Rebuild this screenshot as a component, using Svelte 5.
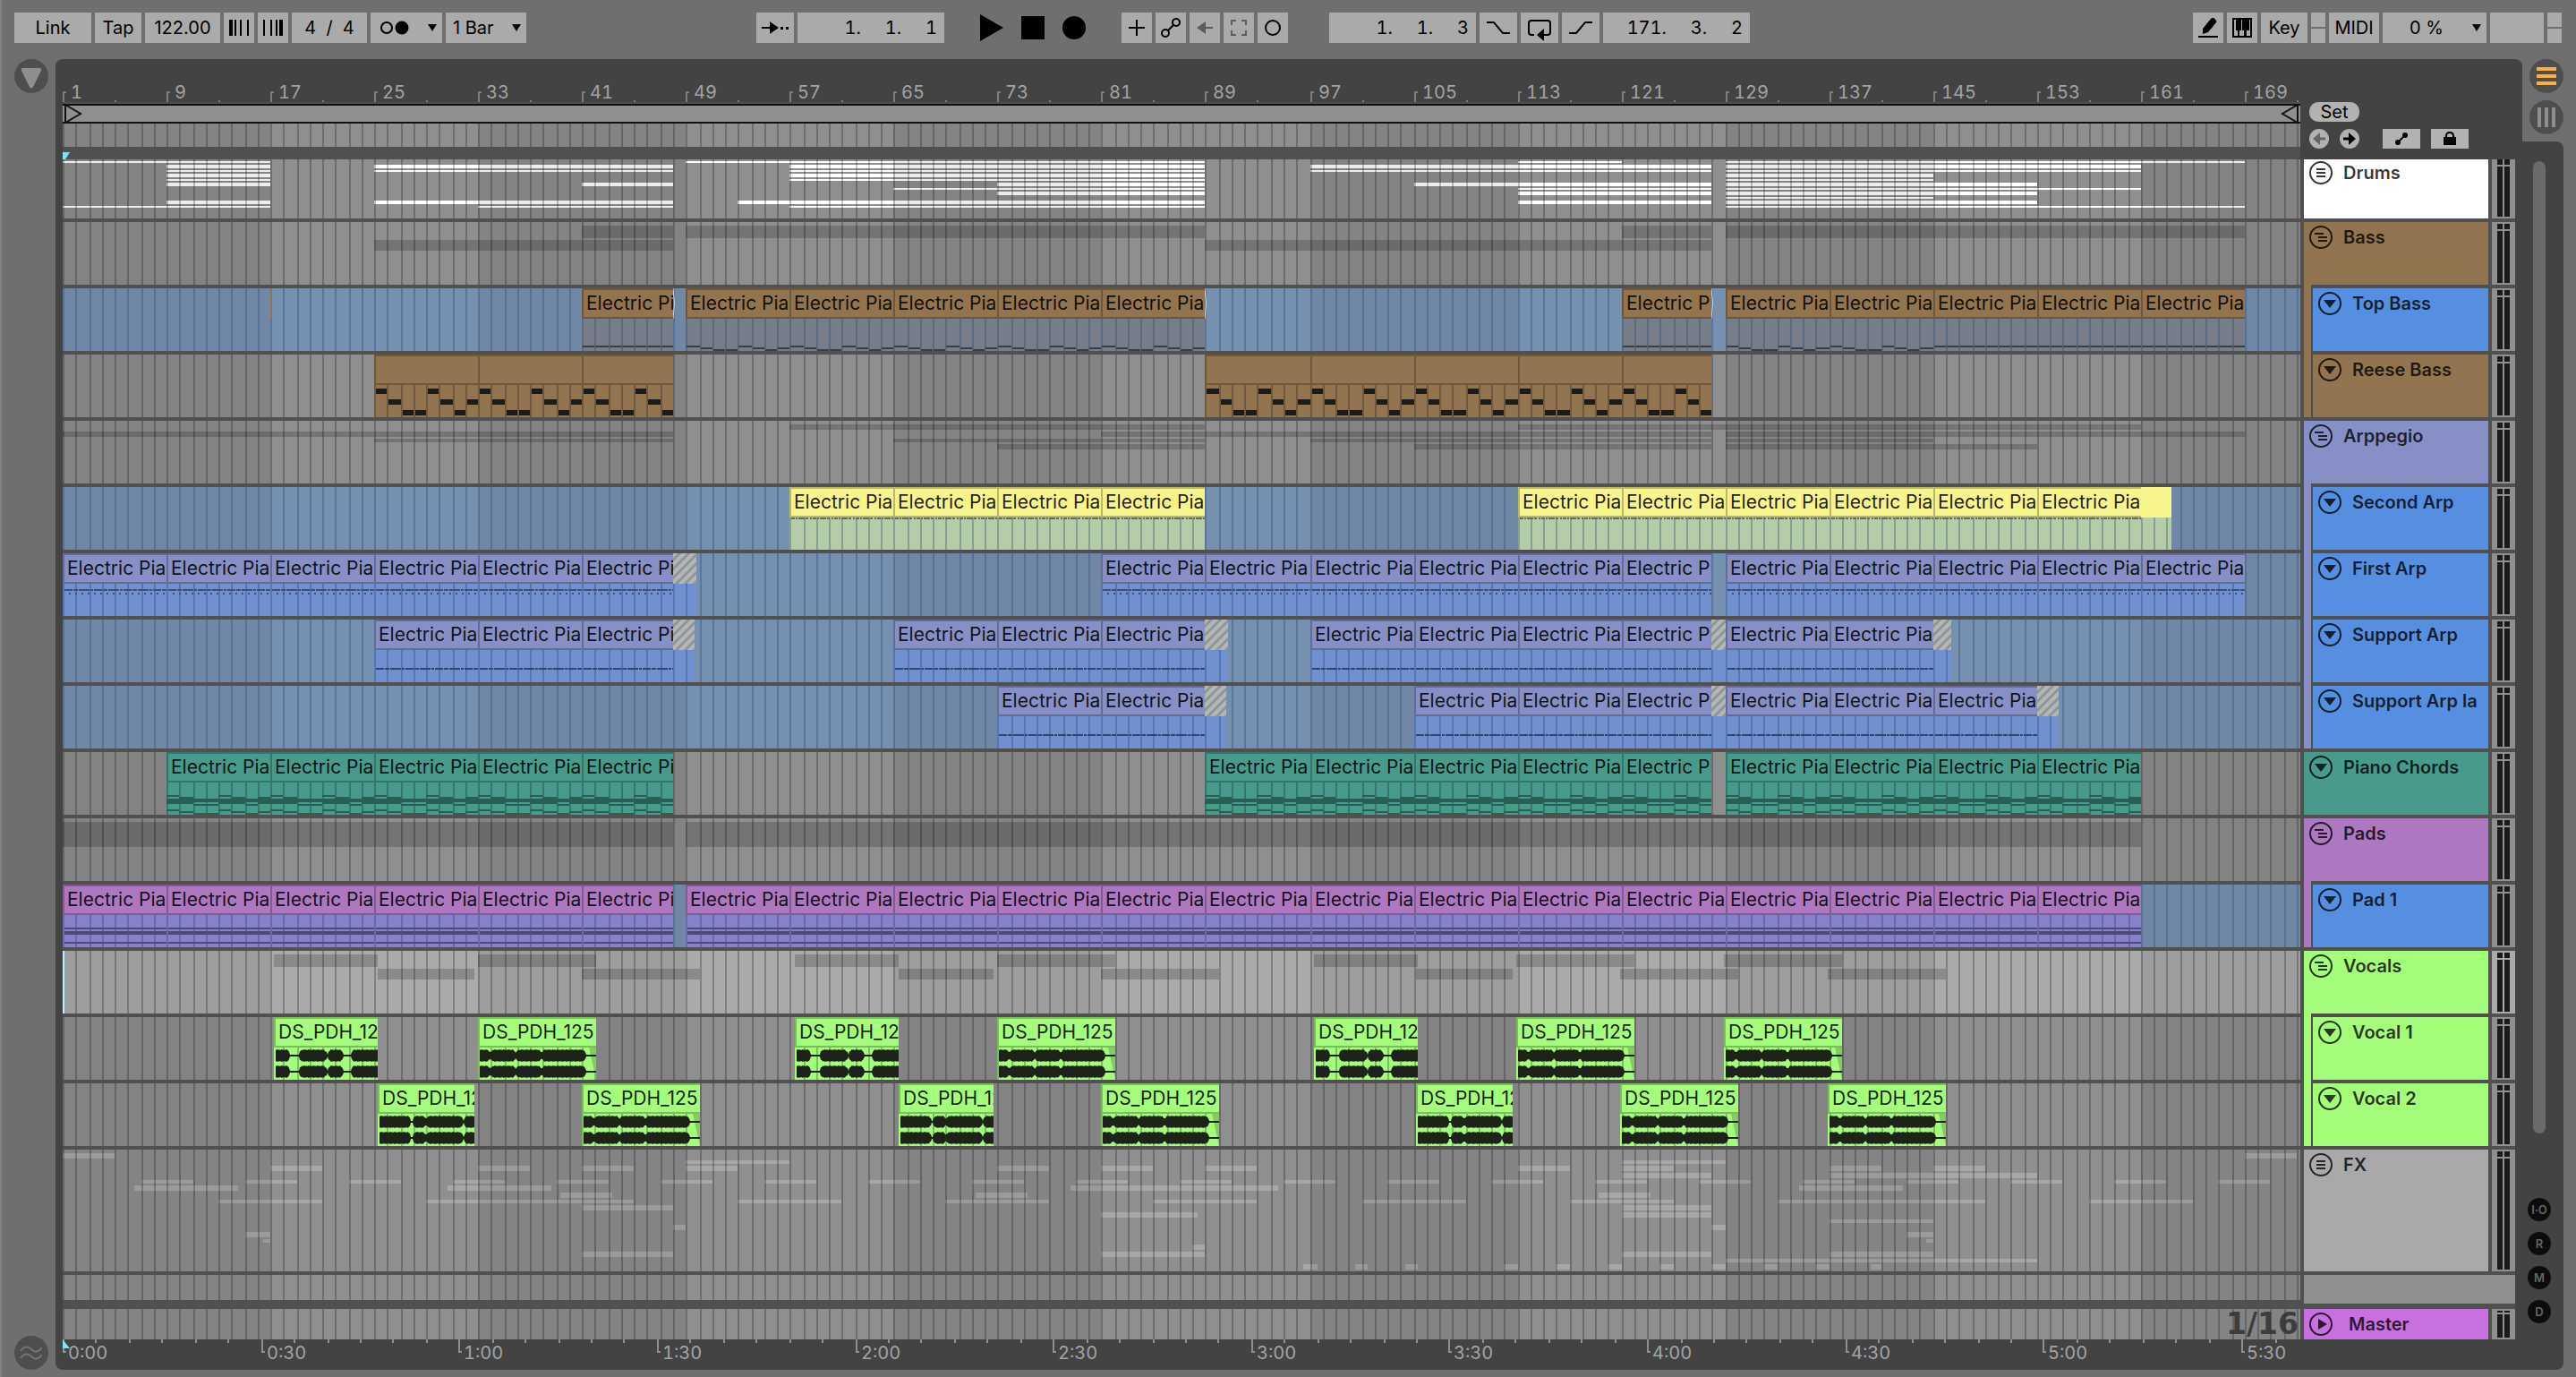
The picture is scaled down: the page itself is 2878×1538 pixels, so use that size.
<script>
  const TOTAL_BARS = 172.29;
  const BEATS_PER_SECOND = 122 / 60;

  let width = $state(2500);
  let ppb = $derived(width / TOTAL_BARS);

  // snap to even pixels so grid lines and clip edges stay crisp
  function x(bar) {
    return 2 * Math.round((bar * ppb) / 2);
  }

  const range = (from, to, step = 8) => {
    const out = [];
    for (let b = from; b < to; b += step) out.push([b, Math.min(b + step, to)]);
    return out;
  };

  const BLUE_LANE = '#7690af';
  const BLUE_BODY = '#7090d0';
  const BLUE = '#578fe0';
  const BROWN = '#937450';
  const LILAC = '#8690c6';
  const TEAL = '#489a8d';
  const PURPLE = '#ad78c0';
  const GREEN = '#a5fc7a';

  // stripes: [top, height, [from, to], ...]
  const drumStripes = [
    [2, 2, [0, 16], [48, 88], [112, 120], [128, 168]],
    [6, 4, [8, 16], [24, 47], [56, 88], [96, 127], [128, 160]],
    [12, 2, [8, 16], [24, 47], [56, 88], [96, 127], [128, 160]],
    [16, 4, [8, 16], [56, 88], [128, 144]],
    [22, 2, [8, 16], [56, 88], [128, 144]],
    [26, 4, [8, 16], [40, 47], [72, 88], [104, 127], [128, 152]],
    [32, 2, [64, 88], [112, 127], [128, 160]],
    [36, 4, [72, 88], [112, 127], [128, 152]],
    [42, 2, [128, 144]],
    [46, 4, [8, 16], [24, 47], [52, 88], [112, 127], [128, 152]],
    [52, 2, [0, 16], [32, 47], [56, 88], [128, 168]],
  ];

  const bassStripes = [
    [4, 14, [40, 47], [48, 88], [120, 127], [128, 168]],
    [20, 12, [24, 47], [88, 127]],
  ];

  const arpStripes = [
    [4, 6, [56, 88], [112, 160]],
    [12, 6, [0, 47], [80, 127], [128, 168]],
    [20, 4, [24, 47], [64, 88], [96, 127], [128, 144]],
    [26, 6, [72, 88], [104, 127], [128, 152]],
  ];

  const fxStripes = [
    [4, 6, [0, 4], [168, 172]],
    [12, 4, [48, 56], [120, 128]],
    [18, 6, [16, 20], [32, 36], [40, 44], [48, 52], [72, 76], [80, 84], [88, 92], [112, 116], [120, 124], [136, 140], [144, 148]],
    [26, 6, [120, 127], [136, 152]],
    [34, 4, ...Array.from({ length: 21 }, (_, i) => [6 + i * 8, 10 + i * 8])],
    [40, 6, [5.5, 13.5], [29.6, 37.6], [77.6, 93.6], [133.7, 141.7]],
    [48, 6, [38.3, 42.3], [70.3, 74.3], [118.3, 122.3]],
    [56, 4, [12, 20], [28, 44], [52, 60], [68, 76], [84, 92], [100, 108], [116, 124], [132, 148], [156, 164]],
    [62, 6, [40, 47], [120, 127]],
    [70, 6, [80, 87.4], [120, 127]],
    [78, 4, [136, 144]],
    [84, 6, [47, 48], [127, 128]],
    [92, 6, [14.1, 16], [142, 144]],
    [100, 4, [15.4, 16], [143.5, 144]],
    [106, 6, [87, 88]],
    [114, 6, [40, 47], [80, 88], [120, 127], [136, 144]],
    [122, 4, [128, 152]],
    [128, 6, [95.5, 96.6], [99.5, 100.5], [103.4, 104.4], [111, 112], [115, 116], [119, 120], [123, 124], [127, 128], [131, 132], [135, 136], [139.2, 140]],
  ];

  const vocal1 = [[16.3, 24.3], [32, 41.05], [56.4, 64.4], [72, 81.05], [96.3, 104.3], [111.9, 120.95], [127.9, 136.95]];
  const vocal2 = [[24.3, 31.65], [40, 49.05], [64.3, 71.65], [80, 89.05], [104.2, 111.6], [119.9, 128.95], [135.9, 144.95]];
  const vocalStripes = [[4, 14, ...vocal1], [20, 12, ...vocal2]];

  const reeseClips = [...range(24, 47), ...range(88, 127)];
  const secondClips = [...range(56, 88), ...range(112, 160)];
  const firstClips = [...range(0, 47), ...range(80, 127), ...range(128, 168)];
  const supportClips = [...range(24, 47), ...range(64, 88), ...range(96, 127), ...range(128, 144)];
  const layerClips = [...range(72, 88), ...range(104, 127), ...range(128, 152)];
  const pianoClips = [...range(8, 47), ...range(88, 127), ...range(128, 160)];
  const padClips = [...range(0, 47), ...range(48, 160)];
  const topClips = [...range(40, 47), ...range(48, 88), ...range(120, 127), ...range(128, 168)];

  const EP = 'Electric Pia';

  const tracks = [
    { name: 'Drums', icon: 'list', color: '#ffffff', height: 66, cut: true, stripes: drumStripes, stripeColor: '#ffffff' },
    { name: 'Bass', icon: 'group', color: BROWN, stripes: bassStripes },
    { name: 'Top Bass', parent: BROWN, color: BLUE, lane: BLUE_LANE, clips: topClips, label: EP, clip: BROWN, body: '#777e89', notes: 'top', fades: [47, 88, 127], sliver: 16 },
    { name: 'Reese Bass', parent: BROWN, color: BROWN, clips: reeseClips, label: '', clip: BROWN, body: BROWN, notes: 'reese' },
    { name: 'Arppegio', icon: 'group', color: LILAC, stripes: arpStripes },
    { name: 'Second Arp', parent: LILAC, color: BLUE, lane: BLUE_LANE, clips: secondClips, label: EP, clip: '#f8f48c', body: '#b4cca8', notes: 'second', tails: [[160, 162.35]], plainTail: true },
    { name: 'First Arp', parent: LILAC, color: BLUE, lane: BLUE_LANE, clips: firstClips, label: EP, clip: LILAC, body: BLUE_BODY, notes: 'first', tails: [[47, 48.8]] },
    { name: 'Support Arp', parent: LILAC, color: BLUE, lane: BLUE_LANE, clips: supportClips, label: EP, clip: LILAC, body: BLUE_BODY, notes: 'support', tails: [[47, 48.65], [88, 89.7], [127, 128], [144, 145.4]] },
    { name: 'Support Arp la', parent: LILAC, color: BLUE, lane: BLUE_LANE, clips: layerClips, label: EP, clip: LILAC, body: BLUE_BODY, notes: 'support', tails: [[88, 89.6], [127, 128], [152, 153.7]] },
    { name: 'Piano Chords', color: TEAL, clips: pianoClips, label: EP, clip: TEAL, body: TEAL, notes: 'piano' },
    { name: 'Pads', icon: 'group', color: PURPLE, stripes: [[4, 28, [0, 47], [48, 160]]] },
    { name: 'Pad 1', parent: PURPLE, color: BLUE, lane: BLUE_LANE, clips: padClips, label: EP, clip: PURPLE, body: '#8780cb', notes: 'pad' },
    { name: 'Vocals', icon: 'group', color: GREEN, lane: '#aaaaaa', selected: true, stripes: vocalStripes },
    { name: 'Vocal 1', parent: GREEN, color: GREEN, clips: vocal1, label: 'DS_PDH_125', clip: GREEN, body: GREEN, notes: 'wave' },
    { name: 'Vocal 2', parent: GREEN, color: GREEN, clips: vocal2, label: 'DS_PDH_125', clip: GREEN, body: GREEN, notes: 'wave' },
    { name: 'FX', icon: 'list', color: '#a9a9a9', height: 136, stripes: fxStripes, stripeColor: 'rgba(255, 255, 255, 0.22)' },
  ];

  const STEPS = [0, 1, 2, 2, 0, 1, 2, 1];
  const REESE_Y = [38, 50, 62];
  const PIANO = [
    [[48, 2], [52, 4], [56, 2], [64, 2]],
    [[50, 6], [56, 2], [66, 2]],
    [[52, 4], [58, 2], [68, 2]],
  ];

  let darkPath = $derived.by(() => {
    let d = '';
    for (let b = 0; b < TOTAL_BARS; b += 32) {
      d += `M${x(b)} 0H${Math.min(x(b + 16), width)}V200H${x(b)}Z`;
    }
    return d;
  });

  let gridPath = $derived.by(() => {
    let d = '';
    for (let b = 0; b < TOTAL_BARS; b++) d += `M${x(b)} 0h2v200h-2Z`;
    return d;
  });

  const box = (a, b, y, h) => `M${a} ${y}H${b}v${h}H${a}Z`;

  function stripesPath(stripes) {
    return stripes.map(([y, h, ...spans]) => spans.map(([a, b]) => box(x(a), x(b), y, h)).join('')).join('');
  }

  function bodiesPath(track) {
    return [...track.clips, ...(track.tails ?? [])].map(([a, b]) => box(x(a), x(b), 0, 70)).join('');
  }

  function steppedNotes(track) {
    let d = '';
    for (const [a, b] of track.clips) {
      for (let bar = a; bar < b; bar++) {
        const step = STEPS[(bar - a) % 8];
        if (track.notes === 'reese') {
          d += box(x(bar) + 2, x(bar + 1), REESE_Y[step], 6);
        } else if (track.notes === 'piano') {
          for (const [y, h] of PIANO[step]) d += box(x(bar), x(bar + 1), y, h);
        } else {
          const flat = a === 40 || a === 120 || a >= 144;
          d += box(x(bar) + 1, x(bar + 1), 64 + (flat ? 0 : step * 2), 2);
        }
      }
    }
    return d;
  }

  function linePath(clips, y) {
    return clips.map(([a, b]) => `M${x(a) + 2} ${y}H${x(b)}`).join('');
  }

  // loud passages of the three vocal takes, as fractions of the clip
  function blobsFor(len) {
    if (len > 9) return [[0, 0.09], [0.09, 0.31], [0.31, 0.53], [0.53, 0.91]];
    if (len > 7.7) return [[0, 0.14], [0.23, 0.5], [0.51, 0.66], [0.74, 1]];
    return [[0, 0.33], [0.35, 0.49], [0.49, 0.88], [0.89, 1]];
  }

  function wavePath(a, b, cy) {
    const x0 = x(a) + 2;
    const x1 = x(b);
    const blobs = blobsFor(b - a);
    const top = [];
    const bottom = [];
    for (let px = x0, i = 0; px <= x1; px += 1, i++) {
      const t = (px - x0) / (x1 - x0);
      const blob = blobs.find(([s, e]) => t >= s && t <= e);
      let amp = 1;
      if (blob) {
        const edge = Math.min(blob[0] === 0 ? 9 : px - x0 - blob[0] * (x1 - x0), blob[1] === 1 ? 9 : blob[1] * (x1 - x0) - (px - x0));
        amp = Math.min(6, 3 + edge) + ((i * 7) % 5) * 0.25;
      }
      top.push(`${px} ${cy - amp}`);
      bottom.unshift(`${px} ${cy + amp}`);
    }
    return `M${top.join('L')}L${bottom.join('L')}Z`;
  }

  const rulerBars = Array.from({ length: 22 }, (_, i) => i * 8);
  const halfBars = Array.from({ length: 22 }, (_, i) => i * 8 + 4);
  const seconds = Array.from({ length: 68 }, (_, i) => i * 5);
  const barOf = (sec) => (sec * BEATS_PER_SECOND) / 4;
  const clock = (sec) => `${Math.floor(sec / 60)}:${String(sec % 60).padStart(2, '0')}`;
</script>

{#snippet grid()}
  <path d={darkPath} fill="rgba(0, 0, 0, 0.07)" />
  <path d={gridPath} fill="rgba(0, 0, 0, 0.23)" />
{/snippet}

{#snippet caret()}
  <svg class="caret" width="10" height="8" viewBox="0 0 10 8"><path d="M0 0H10L5 8Z" /></svg>
{/snippet}

{#snippet meter()}
  <div class="meter">
    <div class="bar"></div>
    <div class="bar"></div>
  </div>
{/snippet}

<div class="app">
  <header class="toolbar">
    <div class="group">
      <button class="w86">Link</button>
      <button class="w52">Tap</button>
      <input class="w84 centered" aria-label="Tempo" value="122.00" />
      <button class="w34" aria-label="Nudge down">
        <svg width="34" height="34"><path d="M6 8h4v18h-4zM12 8h2v18h-2zM18 8h2v18h-2zM26 8h2v18h-2z" /></svg>
      </button>
      <button class="w34" aria-label="Nudge up">
        <svg width="34" height="34"><path d="M6 8h2v18h-2zM14 8h2v18h-2zM20 8h2v18h-2zM24 8h4v18h-4z" /></svg>
      </button>
      <input class="w84 centered" aria-label="Time signature" value="4  /  4" />
      <button class="w80 metro" aria-label="Metronome">
        <svg width="36" height="16" viewBox="0 0 36 16">
          <circle cx="8" cy="8" r="6" fill="none" stroke="#000" stroke-width="2" />
          <circle cx="25" cy="8" r="7.5" />
        </svg>
        {@render caret()}
      </button>
      <label class="pick w90">
        <select aria-label="Quantization"><option>1 Bar</option></select>
        {@render caret()}
      </label>
    </div>

    <div class="space-a"></div>

    <div class="group">
      <button class="w42" aria-label="Follow">
        <svg width="42" height="34"><path d="M6 16h9v-6l10 7-10 7v-6H6zM27 16h3v3h-3zM33 16h3v3h-3z" /></svg>
      </button>
      <input class="w164" aria-label="Position" value="1.     1.     1" />
    </div>
    <div class="group transport">
      <button class="bare" aria-label="Play"><svg width="26" height="34"><path d="M0 2L26 17L0 32Z" /></svg></button>
      <button class="bare" aria-label="Stop"><svg width="26" height="34"><path d="M0 4H26V30H0Z" /></svg></button>
      <button class="bare" aria-label="Record"><svg width="26" height="34"><circle cx="13" cy="17" r="13" /></svg></button>
    </div>
    <div class="group">
      <button class="w34" aria-label="Overdub"><svg width="34" height="34"><path d="M16 8h2v8h8v2h-8v8h-2v-8H8v-2h8z" /></svg></button>
      <button class="w34" aria-label="Automation arm">
        <svg width="34" height="34" class="line"><circle cx="11" cy="23" r="4" /><circle cx="23" cy="11" r="4" /><path d="M14 20L20 14" /></svg>
      </button>
      <button class="w34" aria-label="Re-enable automation"><svg width="34" height="34"><path fill="#5c5c5c" d="M8 17l10-7v6h8v2h-8v6z" /></svg></button>
      <button class="w34" aria-label="Capture">
        <svg width="34" height="34" class="line"><path stroke="#5c5c5c" d="M9 14V9h5M20 9h5v5M25 20v5h-5M14 25H9v-5" /></svg>
      </button>
      <button class="w34" aria-label="Session record"><svg width="34" height="34" class="line"><circle cx="17" cy="17" r="8" /></svg></button>
    </div>
    <div class="group loop">
      <input class="w164" aria-label="Loop start" value="1.     1.     3" />
      <button class="w42" aria-label="Punch in"><svg width="42" height="34" class="line"><path d="M8 11h8l10 12h8" /></svg></button>
      <button class="w42" aria-label="Loop">
        <svg width="42" height="34"><path class="ln" d="M15 25h-3q-3 0-3-3V12q0-3 3-3h18q3 0 3 3v10q0 3-3 3h-6" /><path d="M18 25l8-7v14z" /></svg>
      </button>
      <button class="w42" aria-label="Punch out"><svg width="42" height="34" class="line"><path d="M8 23h8l10-12h8" /></svg></button>
      <input class="w164" aria-label="Loop length" value="171.     3.     2" />
    </div>

    <div class="space-b"></div>

    <div class="group">
      <button class="w34" aria-label="Draw mode">
        <svg width="34" height="34"><path d="M6 26h22v2H6zM11 24v-6l9-11q2-2 4-.5t2.500 4L17 22z" /></svg>
      </button>
      <button class="w34" aria-label="Computer MIDI keyboard">
        <svg width="34" height="34"><path fill-rule="evenodd" d="M6 6h22v22H6zM8 8v18h4v-6h-2V8zM14 20v6h5v-6h-2V8h-1v12zM22 20v6h4V8h-1v12z" /></svg>
      </button>
      <button class="w52">Key</button>
      <div class="split"><i></i><i></i></div>
      <button class="w56">MIDI</button>
      <label class="pick cpu">
        <select aria-label="CPU load"><option>0 %</option></select>
        {@render caret()}
      </label>
      <div class="blank"></div>
      <div class="split"><i></i><i></i></div>
    </div>
  </header>

  <main>
    <aside class="left-rail">
      <button class="round" aria-label="Show browser">
        <svg width="38" height="38"><path fill="#8e8e8e" d="M10 10h18q3 0 2 3L21 31q-2 3-4 0L8 13q-1-3 2-3z" /></svg>
      </button>
      <button class="round" aria-label="Groove pool">
        <svg width="38" height="38"><path fill="none" stroke="#747474" stroke-width="2" d="M7 17q6-8 12-2t12-2M7 25q6-8 12-2t12-2" /></svg>
      </button>
    </aside>

    <section class="arrangement">
      <div class="top">
        <div class="rulers" bind:clientWidth={width}>
          <svg class="beats" {width} height="48">
            {#each rulerBars as bar}
              <path d="M{x(bar)} 36h4v2h-2v10h-2z" fill="#7c7c7c" />
              <text x={x(bar) + 9} y="44">{bar + 1}</text>
            {/each}
            {#each halfBars as bar}
              <path d="M{x(bar)} 46h2v2h-2z" fill="#7c7c7c" />
            {/each}
          </svg>
          <div class="loop-brace">
            <svg width="20" height="22"><path d="M1 1L18 11L1 21Z" /></svg>
            <svg width="20" height="22"><path d="M19 1L2 11L19 21Z" /></svg>
          </div>
          <svg class="scrub" {width} height="26">{@render grid()}</svg>
          <svg class="marker" width="8" height="8"><path d="M0 0H8L3 8H0Z" /></svg>
        </div>
        <div class="locators">
          <button class="set">Set</button>
          <div class="tools">
            <button class="dot" aria-label="Previous locator">
              <svg width="22" height="22"><path fill="#666" d="M4 11l8-7v5.500h6v3h-6V18z" /></svg>
            </button>
            <button class="dot" aria-label="Next locator">
              <svg width="22" height="22"><path d="M18 11l-8-7v5.500H4v3h6V18z" /></svg>
            </button>
            <button class="tool first" aria-label="Automation mode">
              <svg width="42" height="22"><circle cx="17" cy="15" r="3" /><circle cx="25" cy="7" r="3" /><path class="ln" d="M17 15L25 7" /></svg>
            </button>
            <button class="tool" aria-label="Lock envelopes">
              <svg width="42" height="22"><path d="M14 9h14v9H14z" /><path class="ln" d="M17 10V8q0-4 4-4t4 4v2" /></svg>
            </button>
          </div>
        </div>
      </div>

      <div class="tracks">
        {#each tracks as track}
          <div class="track" class:cut={track.cut} style:height="{track.height ?? 70}px">
            <div class="lane" style:background={track.lane ?? '#8f8f8f'}>
              <svg {width} height={track.height ?? 70}>
                {#if track.stripes}
                  <path d={stripesPath(track.stripes)} fill={track.stripeColor ?? 'rgba(0, 0, 0, 0.19)'} />
                {/if}
                <path d={darkPath} fill={track.lane === BLUE_LANE ? 'rgba(0, 0, 0, 0.05)' : 'rgba(0, 0, 0, 0.07)'} />
                {#if track.clips}
                  <path d={bodiesPath(track)} fill={track.body} />
                {/if}
                <path d={gridPath} fill={track.lane === BLUE_LANE ? 'rgba(30, 60, 100, 0.3)' : 'rgba(0, 0, 0, 0.24)'} />
                {#if track.notes === 'reese'}
                  <path d={steppedNotes(track)} fill="#1c1b17" />
                {:else if track.notes === 'piano'}
                  <path d={steppedNotes(track)} fill="#285f55" />
                {:else if track.notes === 'top'}
                  <path d={steppedNotes(track)} fill="#3a3e42" />
                {:else if track.notes === 'second'}
                  <path class="dash-a" d={linePath(track.clips, 35)} stroke="#5f6d5a" />
                {:else if track.notes === 'first'}
                  <path class="dash-b" d={linePath(track.clips, 41)} stroke="#3f4f7c" />
                  <path class="dots" d={linePath(track.clips, 45)} stroke="#3f4f7c" />
                {:else if track.notes === 'support'}
                  <path class="dash-b" d={linePath(track.clips, 55)} stroke="#34466f" />
                {:else if track.notes === 'pad'}
                  {#each track.clips as [a, b]}
                    <path d={box(x(a) + 2, x(b), 48, 2) + box(x(a) + 2, x(b), 52, 4) + box(x(a) + 2, x(b), 64, 2)} fill="#504a77" />
                  {/each}
                {:else if track.notes === 'wave'}
                  {#each track.clips as [a, b]}
                    {#if b - a > 9}
                      <path d="M{x(b)} 34V70L{x(b) - 8} 34Z" fill="#83cc62" />
                    {/if}
                    <path class="wave" d={wavePath(a, b, 43) + wavePath(a, b, 61)} />
                  {/each}
                {/if}
              </svg>
              {#each track.clips ?? [] as [a, b]}
                <div class="clip" style:left="{x(a)}px" style:width="{x(b) - x(a)}px" style:background-color={track.clip}>{track.label}</div>
              {/each}
              {#each track.tails ?? [] as [a, b]}
                <div
                  class="tail"
                  class:hatched={!track.plainTail}
                  style:left="{x(a)}px"
                  style:width="{x(b) - x(a)}px"
                  style:background-color={track.clip}
                ></div>
              {/each}
              {#each track.fades ?? [] as bar}
                <svg class="fade" style:left="{x(bar)}px" width="3" height="34"><path d="M0 0Q3 17 0 34" /></svg>
              {/each}
              {#if track.sliver}
                <div class="tail" style:left="{x(track.sliver)}px" style:width="2px" style:background-color={track.clip}></div>
              {/if}
              {#if track.selected}<div class="insert"></div>{/if}
            </div>

            <div class="head">
              {#if track.parent}
                <div class="strip" style:background={track.parent}></div>
              {/if}
              <div class="title" style:background={track.color}>
                <button class="fold" aria-label="Fold {track.name}">
                  <svg width="26" height="26" viewBox="0 0 26 26">
                    <circle cx="13" cy="13" r="12" fill="none" stroke="currentColor" stroke-width="2" />
                    {#if track.icon === 'list'}
                      <path d="M8 8h10v2H8zM8 12h10v2H8zM8 16h10v2H8z" />
                    {:else if track.icon === 'group'}
                      <path d="M6 8h10v2H6zM10 12h10v2H10zM10 16h10v2H10z" />
                    {:else}
                      <path d="M6 9H20L13 18Z" />
                    {/if}
                  </svg>
                </button>
                <span>{track.name}</span>
              </div>
            </div>
            <div class="meter-cell" class:selected={track.selected}>{@render meter()}</div>
          </div>
        {/each}

        <div class="track empty">
          <div class="lane"><svg {width} height="28">{@render grid()}</svg></div>
          <div class="drop"></div>
        </div>

        <div class="track master">
          <div class="lane">
            <svg {width} height="34">{@render grid()}</svg>
            <div class="resolution">1/16</div>
          </div>
          <div class="head">
            <div class="title">
              <button class="fold" aria-label="Unfold Master">
                <svg width="26" height="26" viewBox="0 0 26 26">
                  <circle cx="13" cy="13" r="12" fill="none" stroke="currentColor" stroke-width="2" />
                  <path d="M10 7V19L20 13Z" />
                </svg>
              </button>
              <span>Master</span>
            </div>
          </div>
          <div class="meter-cell">{@render meter()}</div>
        </div>
      </div>

      <svg class="times" {width} height="34">
        {#each seconds as sec}
          {#if sec % 30 === 0}
            <path d="M{x(barOf(sec))} 0h2v13h2v2h-4z" fill="#8f8f8f" />
            <text x={x(barOf(sec)) + 6} y="22">{clock(sec)}</text>
          {:else}
            <path d="M{x(barOf(sec))} 0h2v4h-2z" fill="#8f8f8f" />
          {/if}
        {/each}
        <path d="M0 0V10H8Z" fill="#7fe3f7" />
      </svg>
    </section>

    <aside class="right-rail">
      <div class="views">
        <button class="round" aria-label="Arrangement view">
          <svg width="38" height="38"><path fill="#fbb03b" d="M8 9h22v4H8zM8 17h22v4H8zM8 25h22v4H8z" /></svg>
        </button>
        <button class="round" aria-label="Session view">
          <svg width="38" height="38"><path fill="#8e8e8e" d="M9 8h4v22H9zM17 8h4v22h-4zM25 8h4v22h-4z" /></svg>
        </button>
      </div>
      <div class="scroll">
        <div class="thumb"></div>
        <div class="toggles">
          <button>I·O</button>
          <button>R</button>
          <button>M</button>
          <button>D</button>
        </div>
      </div>
    </aside>
  </main>
</div>

<style>
  :global(body) {
    background: #6f6f6f;
  }

  .app {
    min-height: 100vh;
    box-sizing: border-box;
    padding-bottom: 8px;
    border-left: 2px solid #808080;
    font-family: Inter, 'Liberation Sans', sans-serif;
    font-size: 20px;
    color: #000;
    display: flex;
    flex-direction: column;
  }

  svg {
    display: block;
    flex: none;
  }

  button,
  input,
  select {
    font: inherit;
    color: inherit;
    border: 0;
    border-radius: 0;
    padding: 0;
    margin: 0;
    background: #aaa;
    box-sizing: border-box;
  }

  .line,
  .ln {
    fill: none;
    stroke: #000;
    stroke-width: 2px;
  }

  .toolbar {
    display: flex;
    padding: 14px 16px 18px 14px;
  }

  .group {
    display: flex;
    gap: 4px;
    height: 34px;
  }

  .group button {
    display: flex;
    align-items: center;
    justify-content: center;
  }

  .group input {
    padding-right: 8px;
    text-align: right;
    font-variant-numeric: tabular-nums;
  }

  .group input.centered {
    padding: 0;
    text-align: center;
    font-variant-numeric: normal;
  }

  .w34 { width: 34px; }
  .w42 { width: 42px; }
  .w52 { width: 52px; }
  .w56 { width: 56px; }
  .w80 { width: 80px; }
  .w84 { width: 84px; }
  .w86 { width: 86px; }
  .w90 { width: 90px; }
  .w164 { width: 164px; }

  .group .metro {
    justify-content: space-between;
    padding: 0 6px 0 10px;
  }

  .pick {
    display: flex;
    align-items: center;
    background: #aaa;
    box-sizing: border-box;
    padding: 0 6px 0 8px;
  }

  .pick select {
    flex: 1;
    min-width: 0;
    appearance: none;
    background: none;
  }

  .cpu {
    width: 116px;
    padding-left: 30px;
  }

  .space-a { flex: 1; }
  .space-b { flex: 2; }

  .transport {
    gap: 20px;
    margin: 0 40px;
  }

  .group .bare {
    background: none;
  }

  .loop {
    margin-left: 46px;
  }

  .split {
    width: 16px;
    display: flex;
    flex-direction: column;
    gap: 2px;
  }

  .split i {
    flex: 1;
    background: #aaa;
  }

  .blank {
    width: 60px;
    background: #aaa;
  }

  .space-a { flex: 41; }
  .space-b { flex: 79; }

  main {
    flex: 1;
    display: flex;
  }

  .left-rail {
    width: 46px;
    padding-left: 14px;
    display: flex;
    flex-direction: column;
    justify-content: space-between;
  }

  .round {
    width: 38px;
    height: 38px;
    border-radius: 50%;
    background: #4e4e4e;
  }

  .arrangement {
    flex: 1;
    min-width: 0;
    background: #434343;
    border-radius: 8px 8px 0 8px;
    padding: 0 8px;
  }

  .top {
    display: flex;
  }

  .rulers {
    flex: 1;
    min-width: 0;
    background: #505050;
  }

  .beats {
    background: #434343;
    overflow: hidden;
  }

  .beats text,
  .times text {
    fill: #a3a3a3;
    font-size: 20px;
    font-variant-numeric: tabular-nums;
  }

  .loop-brace {
    display: flex;
    justify-content: space-between;
    height: 22px;
    margin: 2px 0 0;
    padding: 0 2px;
    background: #8f8f8f;
    box-shadow: inset 0 2px #111, inset 0 -2px #111;
  }

  .loop-brace path {
    fill: none;
    stroke: #111;
    stroke-width: 2px;
  }

  .scrub {
    background: #8f8f8f;
  }

  .marker {
    margin-top: 6px;
    fill: #7fe3f7;
  }

  .locators {
    width: 230px;
    padding: 48px 0 0 10px;
  }

  .set {
    display: block;
    width: 56px;
    height: 22px;
    line-height: 22px;
    border-radius: 10px;
    background: #b2b2b2;
  }

  .tools {
    display: flex;
    margin-top: 8px;
  }

  .tools .dot {
    width: 22px;
    height: 22px;
    border-radius: 50%;
    background: #b2b2b2;
    margin-right: 12px;
  }

  .tools .tool {
    width: 42px;
    height: 22px;
    background: #b2b2b2;
    margin-right: 12px;
  }

  .tools .first {
    margin-left: 14px;
  }

  .tracks {
    display: flex;
    flex-direction: column;
    gap: 4px;
    background: #505050;
  }

  .track {
    display: flex;
    --inset: 4px;
    --meter: 2px;
    --peak: 6px;
  }

  .track.cut {
    --inset: 2px;
    --meter: 0px;
  }

  .lane {
    position: relative;
    flex: 1;
    min-width: 0;
    overflow: hidden;
    background: #8f8f8f;
  }

  .clip,
  .tail {
    position: absolute;
    top: 0;
    height: 34px;
    box-sizing: border-box;
    overflow: hidden;
    white-space: nowrap;
  }

  .clip {
    border: solid rgba(0, 0, 0, 0.25);
    border-width: 2px 0 2px 2px;
    padding-left: 3px;
    font-size: 21px;
    line-height: 30px;
    color: rgba(0, 0, 0, 0.88);
  }

  .tail.hatched {
    background-image: repeating-linear-gradient(135deg, #b6b6b0 0 4px, #8c96a2 4px 7px);
  }

  .fade {
    position: absolute;
    top: 0;
    fill: none;
    stroke: #d8d8d8;
    stroke-width: 1px;
  }

  .insert {
    position: absolute;
    inset: 0 auto 0 0;
    width: 2px;
    background: #b9f1f9;
  }

  .dash-a,
  .dash-b,
  .dots {
    stroke-width: 2px;
  }

  .dash-a { stroke-dasharray: 4 1 2 1 7 1 3 2 2 1; }
  .dash-b { stroke-dasharray: 9 1 5 1 12 1 3 1; }
  .dots { stroke-dasharray: 0 5 2 0; }

  .wave {
    fill: #1d2318;
  }

  .head {
    display: flex;
    width: 206px;
    margin-left: 4px;
  }

  .strip {
    width: 8px;
    margin: -4px 2px 0 0;
  }

  .title {
    flex: 1;
    min-width: 0;
    display: flex;
    align-items: flex-start;
    gap: 12px;
    padding: var(--inset) 0 0 6px;
    overflow: hidden;
    font-weight: 600;
    line-height: 26px;
    white-space: nowrap;
    color: rgba(0, 0, 0, 0.78);
  }

  .fold {
    flex: none;
    background: none;
  }

  .fold svg {
    fill: currentColor;
  }

  .meter-cell {
    width: 26px;
    margin-left: 4px;
    background: #8f8f8f;
  }

  .meter-cell.selected {
    background: #aaa;
  }

  .meter {
    height: 100%;
    box-sizing: border-box;
    display: flex;
    gap: 2px;
    padding: var(--meter) 6px 2px;
  }

  .bar {
    width: 6px;
    background: linear-gradient(#1a1a1a var(--peak), transparent var(--peak) calc(var(--peak) + 2px), #1a1a1a calc(var(--peak) + 2px));
  }

  .empty {
    height: 34px;
    align-items: flex-start;
  }

  .drop {
    width: 236px;
    height: 32px;
    margin-left: 4px;
    background: #8f8f8f;
  }

  .master {
    height: 34px;
    --peak: 2px;
  }

  .master .title {
    background: #c970e0;
    gap: 18px;
  }

  .resolution {
    position: absolute;
    right: 2px;
    top: 0;
    line-height: 34px;
    font-family: 'DejaVu Sans', sans-serif;
    font-size: 33px;
    font-weight: 700;
    color: rgba(48, 48, 48, 0.85);
  }

  .right-rail {
    width: 46px;
    margin-right: 14px;
    display: flex;
    flex-direction: column;
  }

  .views {
    height: 92px;
    padding-left: 8px;
    display: flex;
    flex-direction: column;
    gap: 8px;
  }

  .scroll {
    flex: 1;
    display: flex;
    flex-direction: column;
    justify-content: space-between;
    align-items: flex-start;
    padding: 22px 0 52px 6px;
    background: #434343;
    border-radius: 0 8px 8px 0;
  }

  .thumb {
    width: 14px;
    flex: 1;
    margin: 0 6px 72px;
    border-radius: 7px;
    background: #6b6b6b;
  }

  .toggles {
    display: flex;
    flex-direction: column;
    gap: 12px;
  }

  .toggles button {
    width: 26px;
    height: 26px;
    border-radius: 50%;
    background: #0c0c0c;
    color: #666;
    font-size: 13px;
    font-weight: 600;
  }
</style>
